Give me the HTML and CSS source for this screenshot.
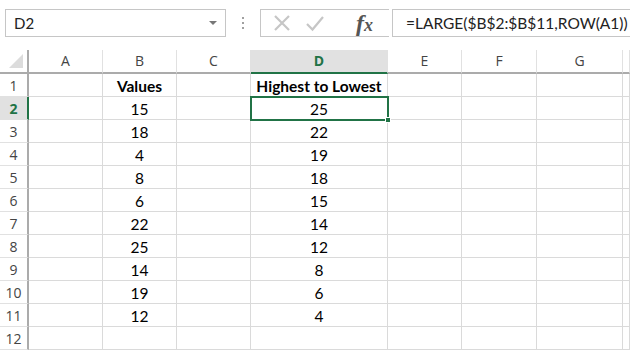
FILE: index.html
```html
<!DOCTYPE html>
<html lang="en">
<head>
  <meta charset="UTF-8" />
  <title>LARGE – Highest to Lowest</title>
  <link rel="stylesheet" href="styles.css">
</head>
<body>
  <div class="formula-bar">
    <div class="name-box">
      <span class="name-text">D2</span>
      <span class="name-arrow"></span>
    </div>
    <div class="grip">
      <span></span><span></span><span></span>
    </div>
    <div class="fx-box">
      <svg class="icon" width="20" height="20" viewBox="0 0 20 20">
        <path d="M3 3 L17 17 M17 3 L3 17" stroke="#c6c6c6" stroke-width="2.2" fill="none" />
      </svg>
      <svg class="icon" width="20" height="20" viewBox="0 0 20 20">
        <path d="M2 11 L7.5 16.5 L18 4" stroke="#c6c6c6" stroke-width="2.2" fill="none" />
      </svg>
      <span class="fx">f<i>x</i></span>
    </div>
    <div class="formula-input">=LARGE($B$2:$B$11,ROW(A1))</div>
  </div>

  <div class="sheet" id="sheet"></div>

  <script>
    const cols = ['A', 'B', 'C', 'D', 'E', 'F', 'G', ''];
    const values = [15, 18, 4, 8, 6, 22, 25, 14, 19, 12];
    const sorted = [...values].sort((a, b) => b - a);
    const sheet = document.getElementById('sheet');

    function cell(text, cls) {
      const el = document.createElement('div');
      el.className = 'cell ' + (cls || '');
      el.textContent = text;
      sheet.appendChild(el);
      return el;
    }

    // naglowki kolumn
    const corner = cell('', 'corner');
    corner.innerHTML = '<span class="tri"></span>';
    cols.forEach(c => cell(c, 'col-head' + (c === 'D' ? ' active' : '')));

    for (let r = 1; r <= 12; r++) {
      cell(r, 'row-head' + (r === 2 ? ' active' : ''));
      cols.forEach(c => {
        let txt = '';
        let cls = '';
        if (r === 1 && c === 'B') { txt = 'Values'; cls = 'bold'; }
        if (r === 1 && c === 'D') { txt = 'Highest to Lowest'; cls = 'bold'; }
        if (r > 1 && r <= 11 && c === 'B') txt = values[r - 2];
        if (r > 1 && r <= 11 && c === 'D') txt = sorted[r - 2];
        if (r === 2 && c === 'D') cls = 'selected';
        const el = cell(txt, cls);
        if (cls === 'selected') el.innerHTML += '<span class="handle"></span>';
      });
    }
  </script>
</body>
</html>
```

FILE: styles.css
```css
*, *::before, *::after {
  box-sizing: border-box;
}
body {
  margin: 0;
  width: 630px;
  height: 356px;
  overflow: hidden;
  background: #fff;
  font-family: Lato, 'Noto Sans', sans-serif;
  color: #000;
}

.formula-bar {
  height: 50px;
  display: flex;
  align-items: flex-start;
  padding-top: 9px;
  padding-left: 5px;
}
.name-box {
  width: 221px;
  height: 28px;
  border: 1px solid #c6c6c6;
  display: flex;
  align-items: center;
  justify-content: space-between;
  padding: 0 8px 0 8px;
  font-size: 15px;
  color: #222;
}
.name-arrow {
  width: 0;
  height: 0;
  border-left: 4px solid transparent;
  border-right: 4px solid transparent;
  border-top: 4px solid #777;
}
.grip {
  width: 34px;
  height: 28px;
  display: flex;
  flex-direction: column;
  align-items: center;
  justify-content: center;
  gap: 3px;
}
.grip span {
  width: 2px;
  height: 2px;
  background: #a0a0a0;
}
.fx-box {
  width: 129px;
  height: 28px;
  border: 1px solid #c6c6c6;
  border-right: none;
  display: flex;
  align-items: center;
  gap: 13px;
  padding-left: 11px;
}
.fx {
  margin-left: 18px;
  font-family: 'Liberation Serif', serif;
  font-style: italic;
  font-weight: 700;
  font-size: 24px;
  color: #555;
  line-height: 1;
}
.fx i {
  font-size: 18px;
}
.formula-input {
  flex: 1;
  height: 28px;
  border: 1px solid #c6c6c6;
  border-right: none;
  margin-left: 3px;
  padding-left: 13px;
  font-size: 15.5px;
  line-height: 26px;
  color: #222;
}

.sheet {
  display: grid;
  grid-template-columns: 29px 74px 74px 74px 137px 74px 75px 86px 1fr;
  grid-template-rows: 24px repeat(12, 23px);
}
.cell {
  border-right: 1px solid #dadada;
  border-bottom: 1px solid #dadada;
  font-size: 15.5px;
  line-height: 22px;
  padding-top: 1px;
  text-align: center;
  white-space: nowrap;
  position: relative;
}
.bold {
  font-weight: 700;
}
.corner {
  border-right: 2px solid #ababab;
  border-bottom: 2px solid #ababab;
}
.corner .tri {
  position: absolute;
  right: 4px;
  bottom: 4px;
  width: 0;
  height: 0;
  border-left: 14px solid transparent;
  border-bottom: 14px solid #dcdcdc;
}
.col-head {
  border-bottom: 2px solid #ababab;
  border-right-color: #e1e1e1;
  font-family: 'Open Sans', sans-serif;
  font-size: 14px;
  color: #444;
  line-height: 21px;
  padding-top: 0;
}
.col-head.active {
  background: #e1e1e1;
  border-bottom-color: #217346;
  color: #217346;
  font-weight: 700;
}
.row-head {
  border-right: 2px solid #ababab;
  border-bottom-color: #e1e1e1;
  font-family: 'Open Sans', sans-serif;
  font-size: 14px;
  color: #444;
  line-height: 22px;
}
.row-head.active {
  background: #e1e1e1;
  border-right-color: #217346;
  color: #217346;
  font-weight: 700;
}
.selected {
  outline: 2px solid #217346;
  outline-offset: -1px;
  z-index: 2;
}
.handle {
  position: absolute;
  right: -4px;
  bottom: -4px;
  width: 6px;
  height: 6px;
  background: #217346;
  border: 1px solid #fff;
}
```
